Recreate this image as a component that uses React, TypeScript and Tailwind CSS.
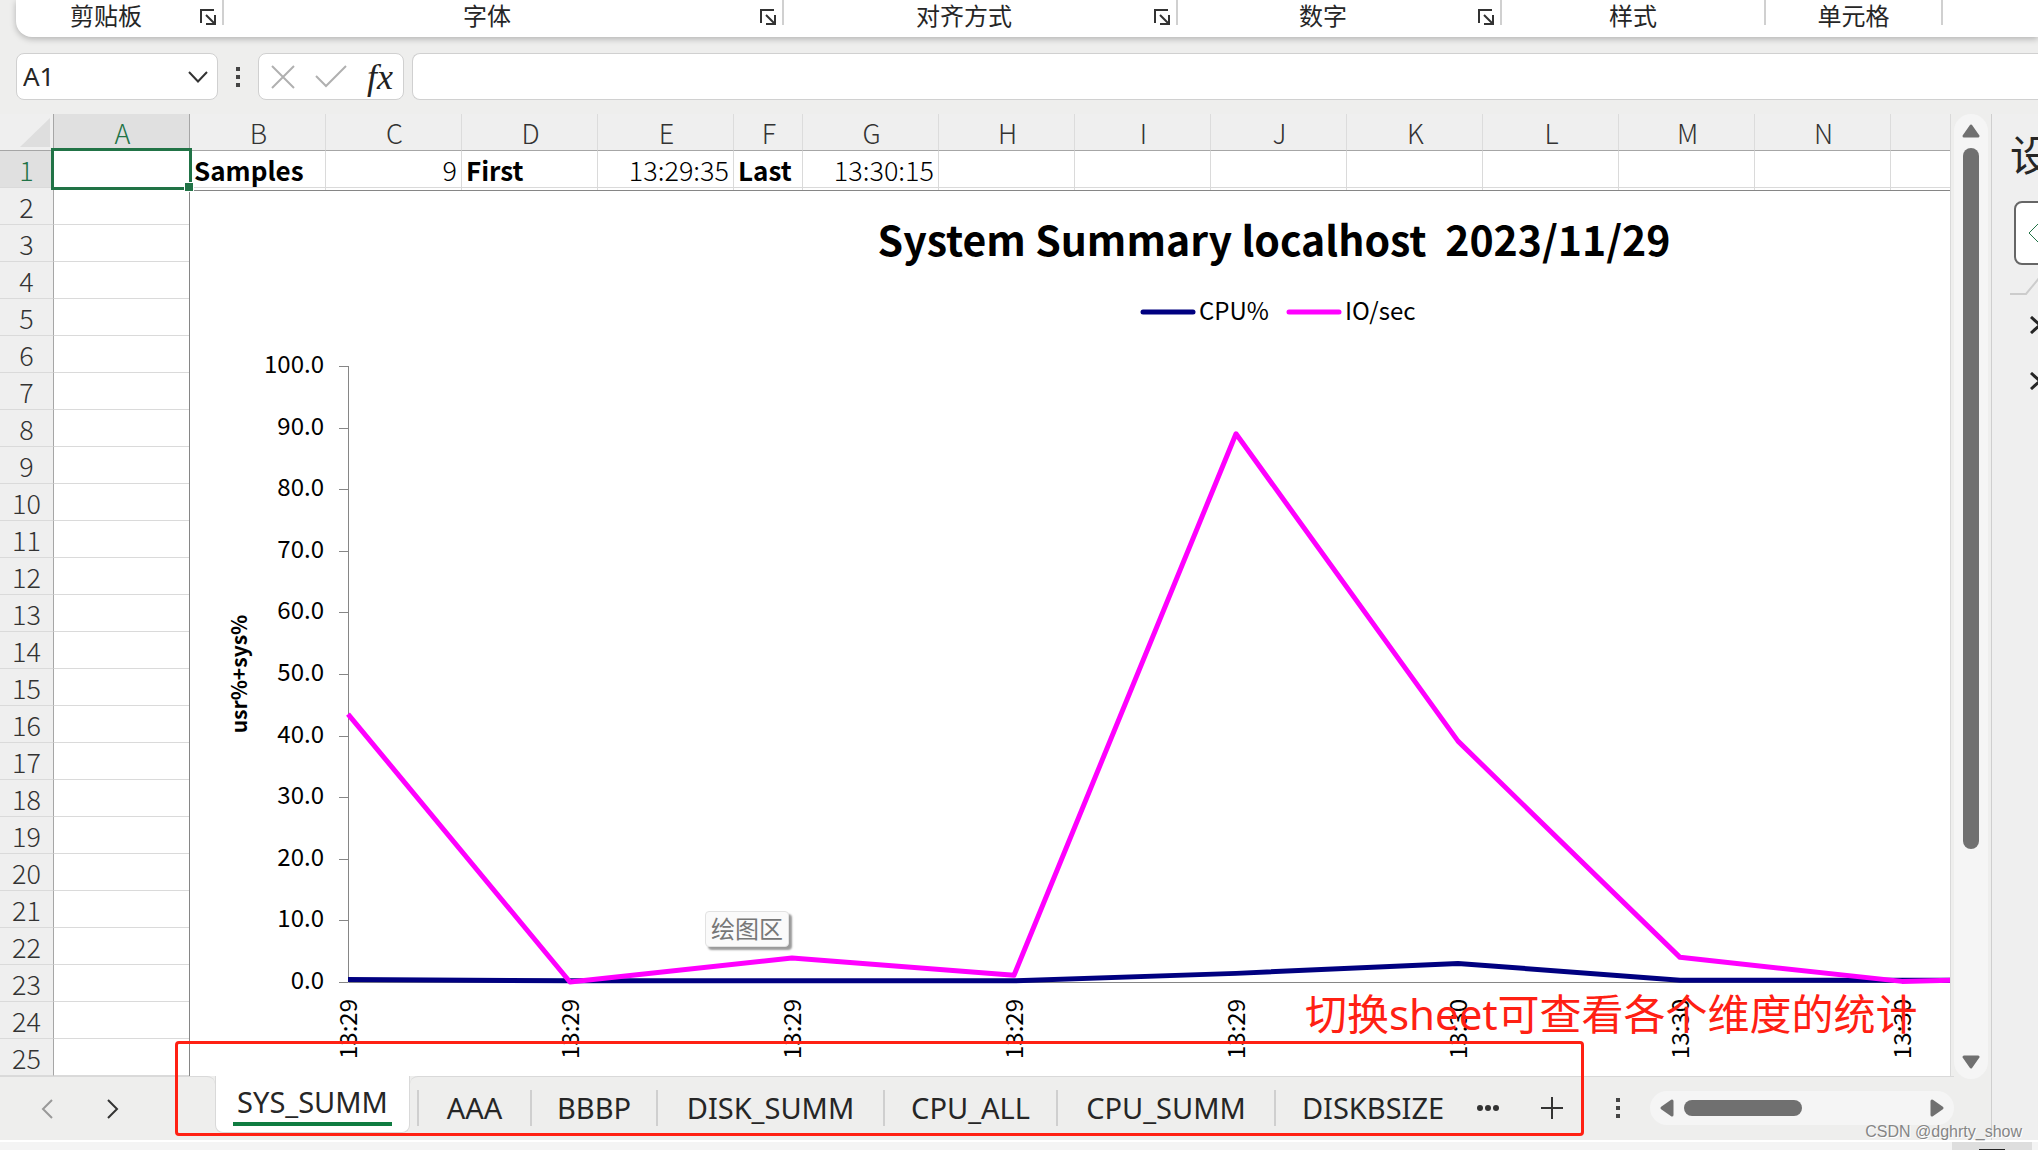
import React from 'react';
import clsx from 'clsx';

const ribbonGroups = [
  { label: '剪贴板', width: 'w-[202px]', launcher: true },
  { label: '字体', width: 'w-[560px]', launcher: true },
  { label: '对齐方式', width: 'w-[394px]', launcher: true },
  { label: '数字', width: 'w-[324px]', launcher: true },
  { label: '样式', width: 'w-[264px]', launcher: false },
  { label: '单元格', width: 'w-[177px]', launcher: false },
];

const columns = ['A', 'B', 'C', 'D', 'E', 'F', 'G', 'H', 'I', 'J', 'K', 'L', 'M', 'N', 'O'];
const rows = Array.from({ length: 25 }, (_, i) => i + 1);

const firstRow: Record<string, { value: string; className: string }> = {
  B: { value: 'Samples', className: 'text-left text-[26px] font-bold' },
  C: { value: '9', className: 'text-right' },
  D: { value: 'First', className: 'text-left text-[26px] font-bold' },
  E: { value: '13:29:35', className: 'text-right' },
  F: { value: 'Last', className: 'text-left text-[26px] font-bold' },
  G: { value: '13:30:15', className: 'text-right' },
};

const samples = [
  { time: '13:29', cpu: 0.4, io: 43.5 },
  { time: '13:29', cpu: 0.2, io: 0 },
  { time: '13:29', cpu: 0.2, io: 3.9 },
  { time: '13:29', cpu: 0.2, io: 1.1 },
  { time: '13:29', cpu: 1.4, io: 89 },
  { time: '13:30', cpu: 3, io: 39.1 },
  { time: '13:30', cpu: 0.3, io: 4 },
  { time: '13:30', cpu: 0.3, io: 0.1 },
  { time: '13:30', cpu: 0.3, io: 1 },
];

const sheets = [
  { name: 'AAA', width: 'w-[113px]' },
  { name: 'BBBP', width: 'w-[126px]' },
  { name: 'DISK_SUMM', width: 'w-[227px]' },
  { name: 'CPU_ALL', width: 'w-[173px]' },
  { name: 'CPU_SUMM', width: 'w-[218px]' },
  { name: 'DISKBSIZE', width: 'w-[196px]' },
];

// 图表坐标换算
const AXIS_X = 158;
const AXIS_Y = 791;
const STEP_X = 222;
const STEP_Y = 6.16;
const toPoints = (key: 'cpu' | 'io') =>
  samples.map((s, i) => `${AXIS_X + i * STEP_X},${AXIS_Y - s[key] * STEP_Y}`).join(' ');

const LauncherIcon = () => (
  <svg width="16" height="16" viewBox="0 0 16 16" fill="none" stroke="#333" strokeWidth="2">
    <path d="M1 14V1H14M6 6L14 14M15 6V15H6" />
  </svg>
);

const MoreDots = () => (
  <span className="flex flex-col gap-1">
    <span className="size-1 bg-[#444]" />
    <span className="size-1 bg-[#444]" />
    <span className="size-1 bg-[#444]" />
  </span>
);

const Ribbon = () => (
  <div className="ml-4 flex h-[37px] rounded-bl-2xl bg-white pl-[6px] shadow-[0_2px_6px_rgba(0,0,0,0.25)]">
    {ribbonGroups.map((group) => (
      <div key={group.label} className={clsx('flex h-[25px] shrink-0 border-r-2 border-[#d0d0d0]', group.width)}>
        <span className="flex-1 text-center text-2xl leading-8 text-[#262626]">{group.label}</span>
        {group.launcher && (
          <button type="button" aria-label={`${group.label}设置`} className="flex w-8 items-start justify-end pt-[9px] pr-[6px]">
            <LauncherIcon />
          </button>
        )}
      </div>
    ))}
  </div>
);

const FormulaBar = () => (
  <div className="flex h-[77px] items-start pt-4 pl-4">
    <div className="flex h-[47px] w-[202px] shrink-0 items-center rounded-lg border border-[#d0d0d0] bg-white pr-2 pl-[6px]">
      <input aria-label="名称框" defaultValue="A1" className="min-w-0 flex-1 text-[26px] text-[#262626] outline-none" />
      <button type="button" aria-label="展开名称框">
        <svg width="22" height="14" viewBox="0 0 22 14" fill="none" stroke="#333" strokeWidth="2">
          <path d="M2 2L11 11.500L20 2" />
        </svg>
      </button>
    </div>
    <div className="flex h-[47px] w-10 shrink-0 items-center justify-center">
      <MoreDots />
    </div>
    <div className="mr-2 flex h-[47px] w-[146px] shrink-0 items-center justify-between rounded-lg border border-[#d0d0d0] bg-white pr-[10px] pl-3">
      <button type="button" aria-label="取消">
        <svg width="24" height="24" viewBox="0 0 24 24" fill="none" stroke="#b0b0b0" strokeWidth="2">
          <path d="M1 1L23 23M23 1L1 23" />
        </svg>
      </button>
      <button type="button" aria-label="输入">
        <svg width="32" height="24" viewBox="0 0 32 24" fill="none" stroke="#b0b0b0" strokeWidth="2">
          <path d="M1 11L11 21L31 1" />
        </svg>
      </button>
      <button type="button" aria-label="插入函数" className="font-['Liberation_Serif',serif] text-[36px] leading-8 text-[#222] italic">
        fx
      </button>
    </div>
    <input aria-label="编辑栏" className="h-[47px] min-w-0 flex-1 rounded-l-lg border border-r-0 border-[#d0d0d0] bg-white px-2 outline-none" />
  </div>
);

const Grid = () => (
  <table className="w-[2027px] table-fixed border-separate border-spacing-0 font-['Noto_Sans_CJK_SC',sans-serif] text-[27px] leading-[34px] font-light">
    <colgroup>
      <col className="w-[54px]" />
      {columns.map((c) => (
        <col key={c} className={c === 'F' ? 'w-[69px]' : 'w-[136px]'} />
      ))}
    </colgroup>
    <thead>
      <tr className="h-[37px]">
        <td className="border-r border-b border-[#a6a6a6] bg-[#efefef] p-0">
          <svg width="30" height="29" viewBox="0 0 30 29" className="ml-5">
            <path d="M30 0V29H0Z" fill="#dedede" />
          </svg>
        </td>
        {columns.map((c) => (
          <th
            key={c}
            scope="col"
            className={clsx(
              'border-r border-b border-b-[#a6a6a6] pt-[2px] pb-0 pl-[2px] font-light',
              c === 'A' ? 'border-r-[#a6a6a6] bg-[#e0e0e0] text-[#217346]' : 'border-r-[#dcdcdc] bg-[#efefef] text-[#333]'
            )}
          >
            {c}
          </th>
        ))}
      </tr>
    </thead>
    <tbody>
      {rows.map((r) => (
        <tr key={r} className="h-[37px]">
          <th
            scope="row"
            className={clsx(
              'border-r border-b border-r-[#a6a6a6] border-b-[#dadada] px-0 pt-[2px] pb-0 font-light',
              r === 1 ? 'bg-[#e0e0e0] text-[#217346]' : 'bg-[#efefef] text-[#333]'
            )}
          >
            {r}
          </th>
          {columns.map((c) => {
            const cell = r === 1 ? firstRow[c] : undefined;
            return (
              <td key={c} className={clsx('border-r border-b border-[#dadada] bg-white px-1 pt-[2px] pb-0 text-black', cell?.className)}>
                {cell?.value}
              </td>
            );
          })}
        </tr>
      ))}
    </tbody>
  </table>
);

const SummaryChart = () => (
  <svg
    width="2169"
    height="887"
    viewBox="0 0 2168 886"
    className="border-t border-l border-[#868686] bg-white font-['Noto_Sans_CJK_SC',sans-serif] text-2xl"
  >
    <text x="1084" y="65" textAnchor="middle" className="text-[41px] font-bold whitespace-pre">
      {'System Summary localhost  2023/11/29'}
    </text>

    {/* 图例 */}
    <g strokeWidth="5" strokeLinecap="round">
      <path d="M953 121H1003" stroke="#000080" />
      <path d="M1099 121H1149" stroke="#ff00ff" />
    </g>
    <text x="1009" y="129">CPU%</text>
    <text x="1155" y="129">IO/sec</text>

    {/* 坐标轴 */}
    <text transform="translate(57 483) rotate(-90)" textAnchor="middle" className="text-[21px] font-bold">
      usr%+sys%
    </text>
    <path d="M158.500 175V791.500H2168" fill="none" stroke="#868686" />
    {Array.from({ length: 11 }, (_, i) => (
      <g key={i}>
        <path d={`M149 ${Math.round(AXIS_Y - i * 61.6) + 0.5}H158`} stroke="#868686" />
        <text x="134" y={AXIS_Y - i * 61.6 + 7} textAnchor="end">
          {(i * 10).toFixed(1)}
        </text>
      </g>
    ))}
    {samples.map((s, i) => (
      <text key={i} transform={`translate(${AXIS_X + i * STEP_X + 9} 808) rotate(-90)`} textAnchor="end">
        {s.time}
      </text>
    ))}

    {/* 数据线 */}
    <g fill="none" strokeWidth="5" strokeLinejoin="round">
      <polyline points={toPoints('cpu')} stroke="#000080" />
      <polyline points={toPoints('io')} stroke="#ff00ff" />
    </g>
  </svg>
);

const VerticalScroll = () => (
  <div className="mx-[3px] -mb-[3px] flex w-[34px] shrink-0 flex-col items-center rounded-full bg-[#f5f5f5] py-[10px]">
    <svg width="18" height="14" viewBox="0 0 18 14" fill="#707070" stroke="#707070" strokeWidth="3" strokeLinejoin="round">
      <path d="M9 2L16 12H2Z" />
    </svg>
    <div className="mt-[10px] h-[701px] w-4 rounded-full bg-[#707070]" />
    <svg width="18" height="14" viewBox="0 0 18 14" fill="#707070" stroke="#707070" strokeWidth="3" strokeLinejoin="round" className="mt-auto">
      <path d="M9 12L16 2H2Z" />
    </svg>
  </div>
);

const HorizontalScroll = () => (
  <div className="flex h-[34px] w-[304px] shrink-0 items-center rounded-full bg-[#f5f5f5] px-[10px]">
    <svg width="14" height="18" viewBox="0 0 14 18" fill="#707070" stroke="#707070" strokeWidth="3" strokeLinejoin="round">
      <path d="M2 9L12 2V16Z" />
    </svg>
    <div className="ml-[10px] h-4 w-[118px] rounded-full bg-[#707070]" />
    <svg width="14" height="18" viewBox="0 0 14 18" fill="#707070" stroke="#707070" strokeWidth="3" strokeLinejoin="round" className="ml-auto">
      <path d="M12 9L2 2V16Z" />
    </svg>
  </div>
);

const SheetTabs = () => (
  <div className="flex h-16 items-start pr-[37px]">
    <div className="flex h-16 w-[215px] shrink-0 items-center gap-[54px] rounded-tr-lg border-t border-[#d9d9d9] pl-[41px]">
      <button type="button" aria-label="上一个">
        <svg width="12" height="20" viewBox="0 0 12 20" fill="none" stroke="#999" strokeWidth="2">
          <path d="M11 1L2 10L11 19" />
        </svg>
      </button>
      <button type="button" aria-label="下一个">
        <svg width="12" height="20" viewBox="0 0 12 20" fill="none" stroke="#333" strokeWidth="2">
          <path d="M1 1L10 10L1 19" />
        </svg>
      </button>
    </div>
    <button
      type="button"
      className="flex h-[57px] w-[195px] shrink-0 flex-col items-center rounded-b-lg border-x border-b border-[#d9d9d9] bg-white pt-[6px]"
    >
      <span className="border-b-4 border-[#107c41] px-1 text-[29px] leading-10 text-[#262626]">SYS_SUMM</span>
    </button>
    <div className="flex h-16 flex-1 items-start rounded-tl-lg border-t border-[#d9d9d9] pl-[7px]">
      {sheets.map((sheet) => (
        <button
          key={sheet.name}
          type="button"
          className={clsx('mt-[13px] h-9 shrink-0 border-l-2 border-[#cfcfcf] text-[29px] leading-9 text-[#262626]', sheet.width)}
        >
          {sheet.name}
        </button>
      ))}
      <div className="flex h-[62px] flex-1 items-center">
        <button type="button" aria-label="更多工作表" className="ml-[6px]">
          <svg width="24" height="8" viewBox="0 0 24 8" fill="#333">
            <circle cx="4" cy="4" r="3" />
            <circle cx="12" cy="4" r="3" />
            <circle cx="20" cy="4" r="3" />
          </svg>
        </button>
        <button type="button" aria-label="新工作表" className="ml-10">
          <svg width="24" height="24" viewBox="0 0 24 24" fill="none" stroke="#333" strokeWidth="2">
            <path d="M12 1V23M1 12H23" />
          </svg>
        </button>
        <div className="mr-[30px] ml-auto">
          <MoreDots />
        </div>
        <HorizontalScroll />
      </div>
    </div>
  </div>
);

const FormatPane = () => (
  <aside className="w-[47px] shrink-0 overflow-hidden border-l border-[#cfcfcf] bg-[#efefef] pl-[18px]">
    <h2 className="w-11 pt-2 text-[42px] leading-[66px] text-[#262626]">设</h2>
    <button type="button" aria-label="图表选项" className="mt-[13px] ml-1 flex h-16 w-16 items-center rounded-lg border-2 border-[#666] bg-white pl-3">
      <svg width="40" height="40" viewBox="0 0 40 40" className="shrink-0" fill="none" stroke="#217346" strokeWidth="1">
        <path d="M20 1L1 20L20 39L39 20Z" />
      </svg>
    </button>
    <svg width="40" height="20" viewBox="0 0 40 20" fill="none" stroke="#ccc" strokeWidth="2" className="mt-[11px]">
      <path d="M0 18H16L30 1" />
    </svg>
    <div className="mt-5 ml-5 flex flex-col gap-[38px]">
      {['填充', '边框'].map((name) => (
        <button key={name} type="button" aria-label={name}>
          <svg width="12" height="18" viewBox="0 0 12 18" fill="none" stroke="#262626" strokeWidth="3">
            <path d="M1 1L10 9L1 17" />
          </svg>
        </button>
      ))}
    </div>
  </aside>
);

const App = () => {
  return (
    <div className="relative min-h-screen overflow-hidden bg-[#eeeeed] font-['Noto_Sans','Noto_Sans_CJK_SC',sans-serif]">
      <Ribbon />
      <FormulaBar />

      <div className="flex">
        <div className="relative min-w-0 flex-1">
          <div className="flex">
            <div className="relative h-[962px] min-w-0 flex-1 overflow-hidden border-r border-[#d9d9d9]">
              <Grid />
              {/* 浮于单元格之上的图表 */}
              <div className="absolute top-[76px] left-[189px]">
                <SummaryChart />
              </div>
              <div className="absolute top-[34px] left-[51px] h-[42px] w-[141px] border-3 border-[#217346]">
                <span className="absolute -right-1 -bottom-1 size-2 bg-[#217346] outline-1 outline-white" />
              </div>
              <div className="absolute top-[797px] left-[705px] rounded-sm border border-[#e2e2e2] bg-[#fafafa] px-[5px] text-2xl leading-[34px] text-[#777] shadow-[3px_3px_2px_rgba(0,0,0,0.4)]">
                绘图区
              </div>
            </div>
            <VerticalScroll />
          </div>
          <SheetTabs />

          {/* 红色标注 */}
          <div className="pointer-events-none absolute top-[927px] left-[175px] h-[95px] w-[1409px] rounded-sm border-3 border-[#ff2013]" />
          <p className="absolute top-[875px] left-[1305px] text-[42px] leading-[50px] whitespace-nowrap text-[#ff2013]">
            切换sheet可查看各个维度的统计
          </p>
        </div>
        <FormatPane />
      </div>

      <footer className="flex h-[10px] justify-end border-t-2 border-white bg-[#f4f4f4] pr-[6px]">
        <div className="flex w-20 items-end justify-center bg-[#dedede]">
          <div className="h-px w-[26px] bg-[#262626]" />
        </div>
      </footer>

      <span className="absolute right-4 bottom-[6px] font-['Liberation_Sans',sans-serif] text-base text-[#858585] [text-shadow:1px_1px_0_#fff]">
        CSDN @dghrty_show
      </span>
    </div>
  );
};

export default App;
